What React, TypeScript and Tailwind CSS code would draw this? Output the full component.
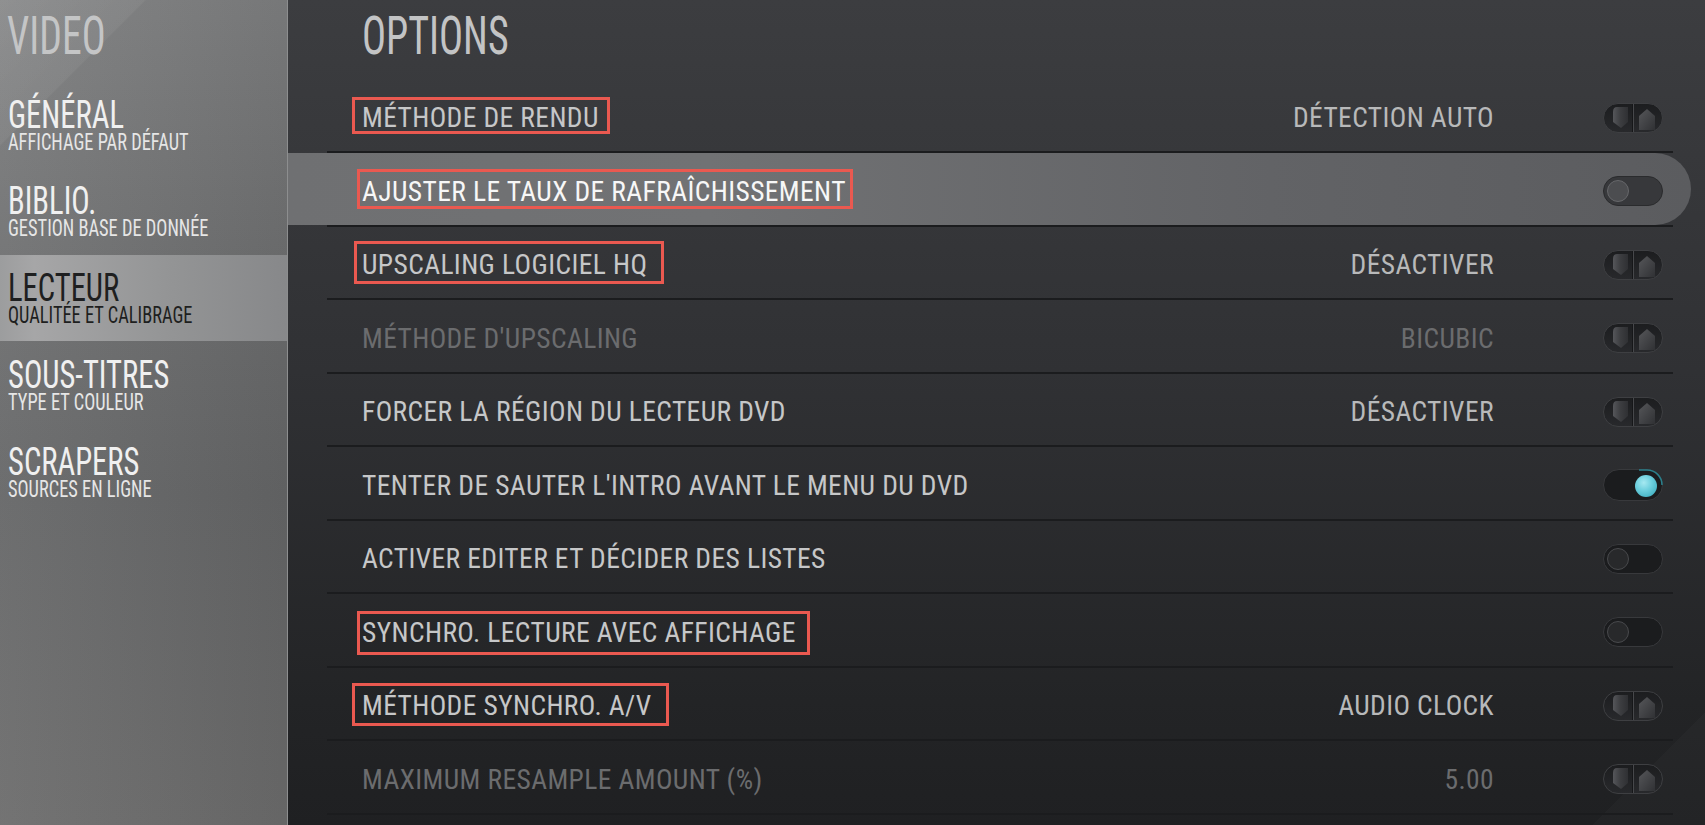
import React from "react";

const FONT = "font-['Liberation_Sans_Narrow','Arial_Narrow','Roboto_Condensed',sans-serif]";

function Spinner() {
  return (
    <svg width="60" height="30" viewBox="0 0 60 30">
      <defs>
        <linearGradient id="spf" x1="0" y1="0" x2="0" y2="1">
          <stop offset="0" stopColor="#1c1d1f" />
          <stop offset="1" stopColor="#28292c" />
        </linearGradient>
        <linearGradient id="spl" x1="0" y1="0" x2="1" y2="0">
          <stop offset="0" stopColor="#55565a" />
          <stop offset="0.5" stopColor="#3c3d40" />
          <stop offset="1" stopColor="#2f3033" />
        </linearGradient>
        <linearGradient id="spr" x1="0" y1="0" x2="1" y2="1">
          <stop offset="0" stopColor="#56575a" />
          <stop offset="1" stopColor="#303134" />
        </linearGradient>
      </defs>
      <rect x="0.5" y="0.5" width="59" height="29" rx="14.5" fill="url(#spf)" stroke="#3e3f42" />
      <line x1="30.5" y1="1" x2="30.5" y2="29" stroke="#47484b" strokeWidth="1" />
      <line x1="29.5" y1="1" x2="29.5" y2="29" stroke="#161719" strokeWidth="1" />
      <path d="M14,4 L25,4 L25,19 L18,25 L10,19 L10,9 Q10,4 14,4 Z" fill="url(#spl)" />
      <path d="M36,13 L44,6 L52,13 L52,27 L36,27 Z" fill="url(#spr)" />
    </svg>
  );
}

function Switch({ on, focused }: { on?: boolean; focused?: boolean }) {
  if (on) {
    return (
      <svg width="60" height="32" viewBox="0 0 60 32">
        <defs>
          <radialGradient id="knobOn" cx="0.4" cy="0.35" r="0.7">
            <stop offset="0" stopColor="#a6e9f1" />
            <stop offset="0.5" stopColor="#6fd0de" />
            <stop offset="1" stopColor="#45b3c4" />
          </radialGradient>
        </defs>
        <rect x="0.5" y="0.5" width="59" height="31" rx="15.5" fill="#1b1c1e" stroke="#38393c" />
        <path d="M36,1 L44,1 A15,15 0 0 1 59,16" fill="none" stroke="#2a7f8b" strokeWidth="1.5" />
        <circle cx="43" cy="17" r="11" fill="url(#knobOn)" />
      </svg>
    );
  }
  return (
    <svg width="60" height="30" viewBox="0 0 60 30">
      <rect
        x="0.5"
        y="0.5"
        width="59"
        height="29"
        rx="14.5"
        fill={focused ? "#37383b" : "#1b1c1e"}
        stroke={focused ? "#2a2b2d" : "#38393c"}
      />
      <circle
        cx="15"
        cy="15"
        r="10.5"
        fill={focused ? "#4c4d50" : "#28292b"}
        stroke={focused ? "#66676a" : "#48494c"}
        strokeWidth="1"
      />
    </svg>
  );
}

type Row = {
  label: string;
  value?: string;
  control: "spin" | "off" | "on";
  disabled?: boolean;
  focused?: boolean;
  box?: string;
};

const rows: Row[] = [
  { label: "MÉTHODE DE RENDU", value: "DÉTECTION AUTO", control: "spin", box: "-left-[10px] -right-[11px] -top-[7px] -bottom-[2px]" },
  { label: "AJUSTER LE TAUX DE RAFRAÎCHISSEMENT", control: "off", focused: true, box: "-left-[5px] -right-[7px] -top-[9px] -bottom-[4px]" },
  { label: "UPSCALING LOGICIEL HQ", value: "DÉSACTIVER", control: "spin", box: "-left-[8px] -right-[17px] -top-[10px] -bottom-[5px]" },
  { label: "MÉTHODE D'UPSCALING", value: "BICUBIC", control: "spin", disabled: true },
  { label: "FORCER LA RÉGION DU LECTEUR DVD", value: "DÉSACTIVER", control: "spin" },
  { label: "TENTER DE SAUTER L'INTRO AVANT LE MENU DU DVD", control: "on" },
  { label: "ACTIVER EDITER ET DÉCIDER DES LISTES", control: "off" },
  { label: "SYNCHRO. LECTURE AVEC AFFICHAGE", control: "off", box: "-left-[5px] -right-[14px] -top-[8px] -bottom-[9px]" },
  { label: "MÉTHODE SYNCHRO. A/V", value: "AUDIO CLOCK", control: "spin", box: "-left-[10px] -right-[18px] -top-[9px] -bottom-[6px]" },
  { label: "MAXIMUM RESAMPLE AMOUNT (%)", value: "5.00", control: "spin", disabled: true },
];

const menu = [
  { t: "GÉNÉRAL", s: "AFFICHAGE PAR DÉFAUT" },
  { t: "BIBLIO.", s: "GESTION BASE DE DONNÉE" },
  { t: "LECTEUR", s: "QUALITÉE ET CALIBRAGE", sel: true },
  { t: "SOUS-TITRES", s: "TYPE ET COULEUR" },
  { t: "SCRAPERS", s: "SOURCES EN LIGNE" },
];

export default function App() {
  return (
    <div className={`w-[1705px] h-[825px] flex overflow-hidden ${FONT}`}>
      {/* Sidebar */}
      <div className="relative w-[288px] shrink-0 h-full border-r border-[#8d8e8f] bg-[linear-gradient(180deg,#7e7f80_0%,#6b6c6d_40%,#656667_60%,#6c6c6c_100%)]">
        <div className="absolute inset-0 pointer-events-none bg-[linear-gradient(90deg,rgba(255,255,255,0.05)_0%,rgba(0,0,0,0.06)_100%)]" />
        <div className="absolute inset-0 pointer-events-none bg-[linear-gradient(135deg,rgba(255,255,255,0.09)_0%,rgba(255,255,255,0.05)_13%,transparent_13.2%)]" />
        <div className="relative h-[81px] pt-[10px] pl-[7px]">
          <span className="block text-[53px] leading-none text-[#c4c5c6] scale-x-[0.75] origin-left whitespace-nowrap">VIDEO</span>
        </div>
        {menu.map((m) => (
          <div
            key={m.t}
            className={`relative h-[86.75px] pl-[8px] pt-[15.5px] ${
              m.sel ? "bg-[linear-gradient(90deg,#9c9d9e_0%,#a6a6a7_12%,#939495_60%,#87888a_100%)]" : ""
            }`}
          >
            <span
              className={`block text-[39px] leading-[36px] scale-x-[0.785] origin-left whitespace-nowrap ${
                m.sel ? "text-[#1e1f20]" : "text-[#f0f0f0]"
              }`}
            >
              {m.t}
            </span>
            <span
              className={`block text-[23px] leading-[20px] scale-x-[0.8] origin-left whitespace-nowrap ${
                m.sel ? "text-[#1e1f20]" : "text-[#e6e6e6]"
              }`}
            >
              {m.s}
            </span>
          </div>
        ))}
      </div>

      {/* Main */}
      <div className="relative flex-1 h-full bg-[linear-gradient(180deg,#3c3d40_0%,#303134_45%,#232426_85%,#1f2022_100%)]">
        <div className="absolute inset-0 pointer-events-none bg-[linear-gradient(135deg,transparent_95%,rgba(255,255,255,0.02)_95%)]" />
        <div className="relative h-[79.5px] pl-[74px] pt-[10px]">
          <span className="block text-[53px] leading-none text-[#c3c4c5] scale-x-[0.755] origin-left whitespace-nowrap">OPTIONS</span>
        </div>
        <div className="relative">
          {rows.map((r, i) => (
            <React.Fragment key={i}>
              <div
                className={`flex items-center h-[71.5px] mr-[14px] pl-[74px] pr-[28px] pt-[5px] ${
                  r.focused ? "rounded-r-full bg-[linear-gradient(90deg,#6f7072_0%,#717274_30%,#626366_70%,#5b5c5f_100%)]" : ""
                }`}
              >
                <span
                  className={`relative text-[27.5px] leading-none tracking-[0.4px] whitespace-nowrap ${
                    r.focused ? "text-[#f7f7f7]" : r.disabled ? "text-[#6b6c6e]" : "text-[#c6c7c8]"
                  }`}
                >
                  {r.label}
                  {r.box && (
                    <span className={`absolute ${r.box} border-[3px] border-[#ea5950] pointer-events-none`} />
                  )}
                </span>
                <div className="flex-1" />
                {r.value && (
                  <span
                    className={`text-[27.5px] leading-none tracking-[0.4px] whitespace-nowrap ${
                      r.disabled ? "text-[#6b6c6e]" : "text-[#b8b9ba]"
                    }`}
                  >
                    {r.value}
                  </span>
                )}
                <div className="w-[60px] ml-[109px] flex items-center justify-center">
                  {r.control === "spin" ? (
                    <Spinner />
                  ) : r.control === "on" ? (
                    <Switch on />
                  ) : (
                    <Switch focused={r.focused} />
                  )}
                </div>
              </div>
              <div className="h-[2px] ml-[39px] mr-[32px] bg-[#1b1c1e]" />
            </React.Fragment>
          ))}
        </div>
      </div>
    </div>
  );
}
